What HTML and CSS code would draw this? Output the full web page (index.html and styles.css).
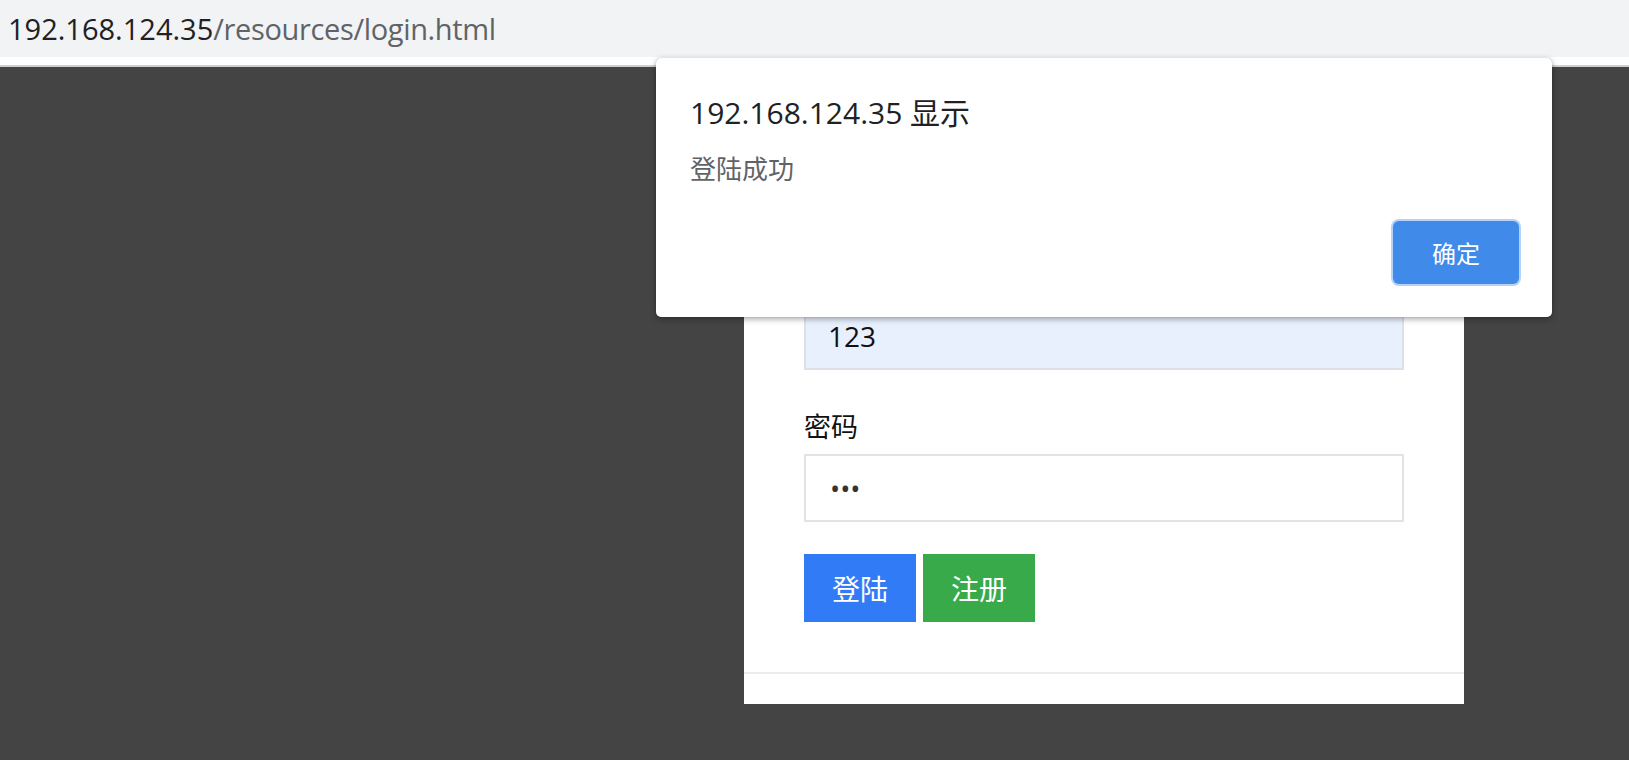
FILE: index.html
```html
<!DOCTYPE html>
<html lang="zh-CN">
<head>
<meta charset="utf-8">
<title>login</title>
<link rel="stylesheet" href="styles.css">
</head>
<body>
<div class="addressbar">
  <span class="host">192.168.124.35</span><span class="path">/resources/login.html</span>
</div>
<div class="strip"></div>
<main class="page">
  <section class="card">
    <div class="card-body">
      <h2 class="card-title">用户登录</h2>
      <label class="field-label">用户名</label>
      <input class="field autofill" type="text" value="123">
      <label class="field-label gap">密码</label>
      <input class="field secret" type="password" value="123">
      <div class="actions">
        <button class="btn btn-blue">登陆</button>
        <button class="btn btn-green">注册</button>
      </div>
    </div>
    <div class="card-foot"></div>
  </section>
</main>
<div class="alert">
  <div class="alert-title">192.168.124.35 显示</div>
  <div class="alert-msg">登陆成功</div>
  <div class="alert-actions">
    <button class="alert-ok">确定</button>
  </div>
</div>
</body>
</html>
```
FILE: styles.css
```css
html, body {
  margin: 0;
  padding: 0;
}
body {
  width: 1629px;
  height: 760px;
  overflow: hidden;
  background: #444444;
  font-family: "Open Sans", "Noto Sans CJK SC", sans-serif;
  position: relative;
}
.addressbar {
  height: 57px;
  background: #f1f3f4;
  padding-left: 8px;
  font-size: 29px;
  line-height: 57px;
  white-space: nowrap;
}
.host { color: #202124; }
.path { color: #5f6368; letter-spacing: -0.35px; }
.strip {
  height: 8px;
  background: #ffffff;
  border-bottom: 2px solid #cfcfcf;
}
.page {
  display: flex;
  padding-left: 744px;
  padding-top: 34px;
  height: 659px;
  background: #444444;
}
.card {
  width: 720px;
  height: 603px;
  background: #ffffff;
  display: flex;
  flex-direction: column;
}
.card-body {
  padding: 40px 60px 0;
  display: flex;
  flex-direction: column;
}
.card-title {
  margin: 0 0 53px;
  font-size: 36px;
  line-height: 60px;
  font-weight: normal;
  font-family: "Noto Sans CJK SC", sans-serif;
}
.field-label {
  display: block;
  font-size: 27px;
  line-height: 40px;
  color: #111;
  font-family: "Noto Sans CJK SC", sans-serif;
}
.field-label.gap { margin-top: 36px; }
.field {
  box-sizing: border-box;
  margin: 8px 0 0;
  height: 68px;
  width: 600px;
  border: 2px solid #e3e3e3;
  padding: 0 22px;
  font-size: 28px;
  font-family: "Open Sans", sans-serif;
  color: #111;
  background: #fff;
  outline: none;
}
.field.secret {
  color: #333;
  padding-left: 24px;
  font-size: 27px;
}
.field.autofill {
  background: #e8f0fe;
  border-color: #dde1e7;
}
.actions {
  display: flex;
  gap: 7px;
  margin-top: 32px;
}
.btn {
  width: 112px;
  height: 68px;
  border: none;
  color: #fff;
  font-size: 28px;
  font-family: "Noto Sans CJK SC", sans-serif;
  padding: 0;
}
.btn-blue { background: #317cf6; }
.btn-green { background: #39aa4a; }
.card-foot {
  margin-top: 50px;
  border-top: 2px solid #ececec;
  height: 30px;
}
.alert {
  position: absolute;
  left: 656px;
  top: 58px;
  width: 896px;
  height: 259px;
  box-sizing: border-box;
  padding: 37px 31px 31px 34px;
  background: #ffffff;
  border-radius: 5px;
  box-shadow: 0 2px 6px rgba(0,0,0,0.35), 0 0 1px rgba(0,0,0,0.3);
  display: flex;
  flex-direction: column;
}
.alert-title {
  font-size: 30px;
  line-height: 36px;
  color: #202124;
}
.alert-msg {
  margin-top: 19px;
  font-size: 26px;
  line-height: 36px;
  color: #5f6368;
  font-family: "Noto Sans CJK SC", sans-serif;
}
.alert-actions {
  margin-top: auto;
  display: flex;
  justify-content: flex-end;
}
.alert-ok {
  width: 126px;
  height: 63px;
  margin: 2px;
  border: none;
  border-radius: 6px;
  background: #408aea;
  box-shadow: 0 0 0 2px #b5d2f8;
  color: #fff;
  font-size: 24px;
  font-family: "Noto Sans CJK SC", sans-serif;
  padding: 0;
}
```
